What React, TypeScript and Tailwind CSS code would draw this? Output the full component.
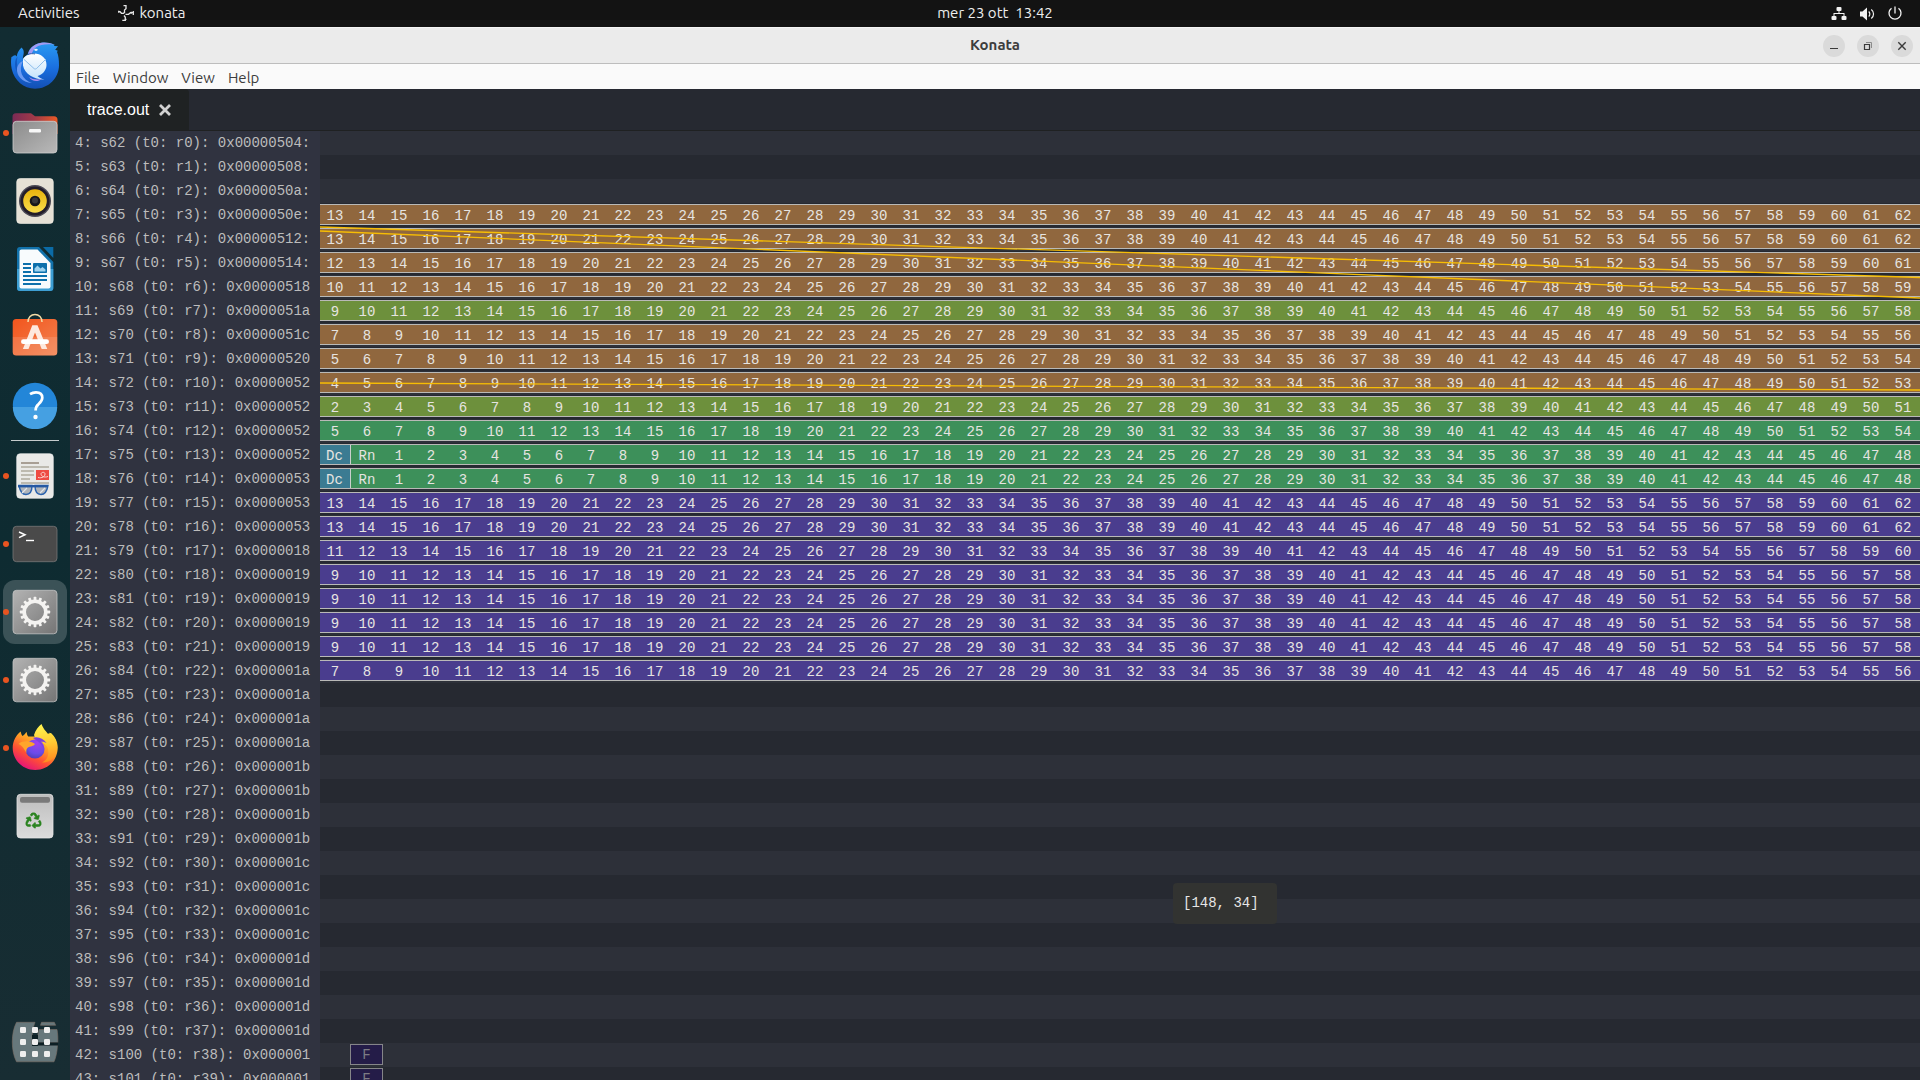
import type { ReactNode } from "react";
import { FaRecycle } from "react-icons/fa";

type Tone = "brown" | "olive" | "green" | "purple";

interface TraceRow {
  label: string;
  tone?: Tone;
  start?: number;
  decode?: boolean;
  fetch?: boolean;
}

const TONES: Record<Tone, string> = {
  brown: "bg-[#90673e]",
  olive: "bg-[#6d903c]",
  green: "bg-[#3d905a]",
  purple: "bg-[#4a3d8e]",
};

const COLUMNS = 50;

const ROWS: TraceRow[] = [
  { label: "4: s62 (t0: r0): 0x00000504:" },
  { label: "5: s63 (t0: r1): 0x00000508:" },
  { label: "6: s64 (t0: r2): 0x0000050a:" },
  { label: "7: s65 (t0: r3): 0x0000050e:", tone: "brown", start: 13 },
  { label: "8: s66 (t0: r4): 0x00000512:", tone: "brown", start: 13 },
  { label: "9: s67 (t0: r5): 0x00000514:", tone: "brown", start: 12 },
  { label: "10: s68 (t0: r6): 0x00000518", tone: "brown", start: 10 },
  { label: "11: s69 (t0: r7): 0x0000051a", tone: "olive", start: 9 },
  { label: "12: s70 (t0: r8): 0x0000051c", tone: "brown", start: 7 },
  { label: "13: s71 (t0: r9): 0x00000520", tone: "brown", start: 5 },
  { label: "14: s72 (t0: r10): 0x0000052", tone: "brown", start: 4 },
  { label: "15: s73 (t0: r11): 0x0000052", tone: "olive", start: 2 },
  { label: "16: s74 (t0: r12): 0x0000052", tone: "green", start: 5 },
  { label: "17: s75 (t0: r13): 0x0000052", tone: "green", start: 1, decode: true },
  { label: "18: s76 (t0: r14): 0x0000053", tone: "green", start: 1, decode: true },
  { label: "19: s77 (t0: r15): 0x0000053", tone: "purple", start: 13 },
  { label: "20: s78 (t0: r16): 0x0000053", tone: "purple", start: 13 },
  { label: "21: s79 (t0: r17): 0x0000018", tone: "purple", start: 11 },
  { label: "22: s80 (t0: r18): 0x0000019", tone: "purple", start: 9 },
  { label: "23: s81 (t0: r19): 0x0000019", tone: "purple", start: 9 },
  { label: "24: s82 (t0: r20): 0x0000019", tone: "purple", start: 9 },
  { label: "25: s83 (t0: r21): 0x0000019", tone: "purple", start: 9 },
  { label: "26: s84 (t0: r22): 0x000001a", tone: "purple", start: 7 },
  { label: "27: s85 (t0: r23): 0x000001a" },
  { label: "28: s86 (t0: r24): 0x000001a" },
  { label: "29: s87 (t0: r25): 0x000001a" },
  { label: "30: s88 (t0: r26): 0x000001b" },
  { label: "31: s89 (t0: r27): 0x000001b" },
  { label: "32: s90 (t0: r28): 0x000001b" },
  { label: "33: s91 (t0: r29): 0x000001b" },
  { label: "34: s92 (t0: r30): 0x000001c" },
  { label: "35: s93 (t0: r31): 0x000001c" },
  { label: "36: s94 (t0: r32): 0x000001c" },
  { label: "37: s95 (t0: r33): 0x000001c" },
  { label: "38: s96 (t0: r34): 0x000001d" },
  { label: "39: s97 (t0: r35): 0x000001d" },
  { label: "40: s98 (t0: r36): 0x000001d" },
  { label: "41: s99 (t0: r37): 0x000001d" },
  { label: "42: s100 (t0: r38): 0x000001", fetch: true },
  { label: "43: s101 (t0: r39): 0x000001", fetch: true },
];

function Cell({ children }: { children: ReactNode }) {
  return <span className="w-8 shrink-0 text-center">{children}</span>;
}

function StageBar({ row }: { row: TraceRow }) {
  if (row.fetch) {
    return (
      <div className="mt-px ml-[30px] h-[21px] w-[33px] border border-[#858589] bg-[#241c48] text-center leading-[21px] text-[#7d7c84]">
        F
      </div>
    );
  }
  if (!row.tone || row.start === undefined) return null;
  const first = row.start;
  const count = row.decode ? COLUMNS - 2 : COLUMNS;
  return (
    <div
      className={`mt-px -ml-px flex h-[21px] w-full grow overflow-hidden border-y border-[#b9b9b7] leading-[22px] text-[#e6e4e1] ${TONES[row.tone]}`}
    >
      {row.decode && (
        <>
          <span className="w-8 shrink-0 border-r border-[#c9cfcc] bg-[#3b7b92] text-center">Dc</span>
          <Cell>Rn</Cell>
        </>
      )}
      {Array.from({ length: count }, (_, i) => (
        <Cell key={i}>{first + i}</Cell>
      ))}
    </div>
  );
}

function Dependencies() {
  return (
    <svg className="pointer-events-none absolute top-0 right-0 left-[250px] h-[300px] w-[calc(100%-250px)]" aria-hidden="true">
      <g stroke="#f7bd04" strokeWidth="1.300">
        <line x1="0" y1="96" x2="100%" y2="146.500" />
        <line x1="0" y1="100" x2="100%" y2="167" />
        <line x1="0" y1="252" x2="100%" y2="259" />
      </g>
    </svg>
  );
}

/* ---------- dock icons, all drawn on a 48 x 48 canvas ---------- */

function Svg({ children }: { children: ReactNode }) {
  return (
    <svg viewBox="0 0 48 48" className="size-12" aria-hidden="true">
      {children}
    </svg>
  );
}

function ThunderbirdIcon() {
  return (
    <Svg>
      <defs>
        <linearGradient id="tb" x1="0" y1="0" x2="0" y2="1">
          <stop offset="0" stopColor="#2a9bf2" />
          <stop offset="0.55" stopColor="#1a6fe0" />
          <stop offset="1" stopColor="#134fb4" />
        </linearGradient>
        <linearGradient id="tbm" x1="0" y1="0" x2="0" y2="1">
          <stop offset="0" stopColor="#ffffff" />
          <stop offset="1" stopColor="#c3e2fb" />
        </linearGradient>
      </defs>
      <path d="M10.5 6.5c-3 3-4.500 6-4.700 9C4 13 3 14.500.4 16c-.5 3.500-.6 8 .3 12C3.500 39.500 12.500 47.700 24 47.700 37.500 47.700 48 37 48 24c0-5-.5-9.500-2-13l.8-1.300-2.600-.9 2.800-3.600-4-.2.6-1.300C35-.3 24.500 1.200 19.500 7.500c-1.700 2.200-2.500 4.200-2.800 6-1.500 1-3.500 2.500-5 4.500C12 14 14.500 10 10.500 6.500z" fill="url(#tb)" />
      <path d="M17 13.500c1-7 8-12 16-12 3.500 0 7 .7 10.500 2.200-8-1-14-.2-18 2.300-2 1.300-4 4.500-5 7z" fill="#b79bf3" opacity="0.85" />
      <path d="M6.500 15.500C5 22 6 32 14 38c-7-3-10-9-10-15 0-3 1-6 2.500-7.500z" fill="#0f4fb5" opacity=".7" />
      <path d="M12 20c-5 9-1 19 9 22-10-.5-16-8-15-15 .5-3 3-6 6-7z" fill="#6a9af2" />
      <path d="M12 18c1.500-3 6-5.500 11-5.500 7 0 12.500 4.500 12.500 11.500 0 6-5 10-9 11 2 2 4 3 7 3.500-9 .5-20-5-21.500-14z" fill="url(#tbm)" />
      <path d="M12.500 18l10.500 9.500c.8.7 1.800.7 2.600 0L35 18" fill="none" stroke="#8dbdeb" strokeWidth="1" />
      <path d="M18 36c3 2.500 9 3 13 2-4 3-10 3-13-2z" fill="#a98cf0" />
      <ellipse cx="25" cy="8.800" rx="1.800" ry="1.100" fill="#e6f3ff" />
      <path d="M17 13.500c2-1 5-1 7-.5" stroke="#0d3f94" fill="none" strokeWidth=".8" />
    </Svg>
  );
}

function FilesIcon() {
  return (
    <Svg>
      <defs>
        <linearGradient id="fb" x1="0" x2="1">
          <stop offset="0" stopColor="#7a2a55" />
          <stop offset="0.5" stopColor="#a33a48" />
          <stop offset="1" stopColor="#ea5a26" />
        </linearGradient>
        <linearGradient id="ff" x1="0" x2="1" y2="1">
          <stop offset="0" stopColor="#8b8b8b" />
          <stop offset="1" stopColor="#b9b9b9" />
        </linearGradient>
      </defs>
      <path d="M5 4.300h15l4 3h19a3.500 3.500 0 0 1 3.500 3.500V25h-45V8A3.600 3.600 0 0 1 5 4.300z" fill="url(#fb)" />
      <rect x="2" y="12.300" width="44" height="31.700" rx="3.500" fill="url(#ff)" stroke="#cfcfcf" strokeWidth=".8" />
      <rect x="18" y="20" width="12" height="3.400" rx="1.200" fill="#f7f7f7" />
    </Svg>
  );
}

function SpeakerIcon() {
  return (
    <Svg>
      <defs>
        <linearGradient id="sp" x1="0" x2="0" y1="0" y2="1">
          <stop offset="0" stopColor="#e8b30c" />
          <stop offset="1" stopColor="#f9dc4c" />
        </linearGradient>
      </defs>
      <rect x="5.700" y="1.500" width="36.600" height="45" rx="3.500" fill="#e6e1d6" stroke="#f5f2ea" strokeWidth=".6" />
      <circle cx="24" cy="24" r="16" fill="#4a4854" />
      <circle cx="24" cy="24" r="14.500" fill="#231d2a" />
      <circle cx="24" cy="24" r="11.800" fill="url(#sp)" />
      <circle cx="24" cy="24" r="5.300" fill="#17171a" />
      <circle cx="24" cy="23.500" r="3" fill="#38383b" />
    </Svg>
  );
}

function WriterIcon() {
  return (
    <Svg>
      <path d="M9 2h19l14.300 15v26a3 3 0 0 1-3 3H9a3 3 0 0 1-3-3V5a3 3 0 0 1 3-3z" fill="#1272ab" />
      <path d="M6 24h36.300v19a3 3 0 0 1-3 3H9a3 3 0 0 1-3-3z" fill="#3d9ed2" />
      <path d="M10.500 4.500h16L39.500 18v23.500a2 2 0 0 1-2 2h-27a2 2 0 0 1-2-2v-35a2 2 0 0 1 2-2z" fill="#f8fbfd" />
      <path d="M32 2h10.300v11z" fill="#0b6ba6" />
      <g fill="#0d70ac">
        <path d="M12 18h8v2h-8zM12 22h8v2h-8zM12 26h8v2h-8zM12 30h24v2H12zM12 34h24v2H12zM12 38h18v2H12z" />
        <rect x="22" y="18" width="14" height="10" rx=".8" />
      </g>
      <path d="M23.500 26.500v-3l3-3 3 3 2-1.500 3 2.500v2z" fill="#9ed3ef" />
    </Svg>
  );
}

function SoftwareIcon() {
  return (
    <Svg>
      <defs>
        <linearGradient id="sw" x1="0" x2="1" y1="0" y2="1">
          <stop offset="0" stopColor="#f2551d" />
          <stop offset="1" stopColor="#f28250" />
        </linearGradient>
      </defs>
      <rect x="1.700" y="6" width="44.600" height="36.400" rx="3.500" fill="url(#sw)" />
      <path d="M1.700 24h44.600v15a3.500 3.500 0 0 1-3.500 3.500H5.200A3.500 3.500 0 0 1 1.700 39z" fill="#fff" opacity=".12" />
      <path d="M17 9c0-4.500 3-7.600 7-7.600S31 4.500 31 9" fill="none" stroke="#f3dca6" strokeWidth="1.500" />
      <path d="M21.300 12.300h5.200L36.300 36h-5.600L24 19.500 17.500 36h-5.600z" fill="#fde9df" />
      <rect x="10" y="26.300" width="28" height="4.800" rx="2.400" fill="#ffffff" />
    </Svg>
  );
}

function HelpIcon() {
  return (
    <Svg>
      <circle cx="24" cy="24" r="22.200" fill="#2386d8" />
      <path d="M1.800 26a22.200 22.200 0 0 0 44.400 0z" fill="#45a0e2" />
      <path d="M19 13.200c2-1.300 4-1.800 6-1.800 4 0 6.300 2.200 6.300 5.400 0 3-1.700 4.500-3.700 6.300-2 1.700-3 3-3 6.400" fill="none" stroke="#fff" strokeWidth="2.700" />
      <circle cx="24.500" cy="36" r="2.200" fill="#fff" />
    </Svg>
  );
}

function DocumentViewerIcon() {
  return (
    <Svg>
      <rect x="5.700" y="1.700" width="36.600" height="44.600" rx="3.500" fill="#e9e9e7" stroke="#f7f7f7" strokeWidth=".6" />
      <path d="M10 10h18v2H10z" fill="#a89f95" />
      <path d="M10 14h28v2H10zM10 18h13v2H10zM10 22h13v2H10zM10 26h9v2h-9zM10 30h28v2H10z" fill="#bdbab0" />
      <rect x="25" y="18" width="13" height="10" fill="#ee4b43" />
      <path d="M27 25.500c4 1 7-1 7-3.500s-4-2-4 0 3 4 7 2.500" fill="none" stroke="#fbd6d2" strokeWidth="1" />
      <path d="M8 33.500h13c0 6-2 9-6 9s-6-3.500-7-9zM24 33.500h13c-1 5.500-3 9-7 9s-6-3-6-9z" fill="#aeb4bb" stroke="#2a62ad" strokeWidth="1.400" />
      <path d="M7 33h30v2.400H7z" fill="#2458a3" />
      <path d="M11 41l5-5M29 41l5-5" stroke="#e3e6ea" strokeWidth="1.200" />
    </Svg>
  );
}

function TerminalIcon() {
  return (
    <Svg>
      <rect x="2" y="6.300" width="44" height="35.400" rx="3.500" fill="#4a4a4a" stroke="#777" strokeWidth=".8" />
      <path d="M8 12l6 2.800-6 2.800" fill="none" stroke="#fff" strokeWidth="1.500" />
      <path d="M15 20.500h8" stroke="#fff" strokeWidth="1.400" />
    </Svg>
  );
}

function SettingsIcon() {
  return (
    <Svg>
      <defs>
        <linearGradient id="st" x1="0" x2="1" y1="0" y2="1">
          <stop offset="0" stopColor="#b3b3b3" />
          <stop offset="1" stopColor="#757575" />
        </linearGradient>
      </defs>
      <rect x="2" y="2.300" width="44" height="43.500" rx="3.500" fill="url(#st)" stroke="#c4c4c4" strokeWidth=".8" />
      <circle cx="24" cy="24" r="10.800" fill="none" stroke="#f4f3f1" strokeWidth="3.600" />
      {Array.from({ length: 16 }, (_, i) => (
        <rect key={i} x="22.600" y="8.800" width="2.800" height="4" rx=".6" fill="#f4f3f1" transform={`rotate(${i * 22.5} 24 24)`} />
      ))}
    </Svg>
  );
}

function FirefoxIcon() {
  return (
    <Svg>
      <defs>
        <linearGradient id="fx" x1=".85" y1="0" x2=".2" y2="1">
          <stop offset="0.05" stopColor="#ffe03a" />
          <stop offset="0.4" stopColor="#ff9a25" />
          <stop offset="0.65" stopColor="#ff4f35" />
          <stop offset="0.95" stopColor="#e3117c" />
        </linearGradient>
        <linearGradient id="fy" x1=".5" y1="0" x2=".6" y2="1">
          <stop offset="0" stopColor="#fff44f" />
          <stop offset="0.5" stopColor="#ffc933" />
          <stop offset="1" stopColor="#ff8a1e" />
        </linearGradient>
        <radialGradient id="fg" cx=".6" cy=".2" r=".9">
          <stop offset="0" stopColor="#a03ff0" />
          <stop offset="0.6" stopColor="#6a4be8" />
          <stop offset="1" stopColor="#4a3aa8" />
        </radialGradient>
      </defs>
      <path d="M9.700 7.500c.3 2 .8 3 1.700 4.500 1.600-.8 3-2.500 4.200-4.300.3 2.300.6 3.600 1.600 4.800h8L40 9c4 3.500 6.700 9 6.700 14.500 0 13-10 22.500-22.500 22.500S1.700 36 1.700 24c0-6.500 3-12.500 8-16.500z" fill="url(#fx)" />
      <path d="M30.500 0c2 6 6 8 7.500 12 .7-.6.800-2 .6-3.500 4.500 3.500 7.600 9 7.600 15C46.200 33 39 39 31 38.500c5-2 8-8 5.500-15C34 18 24 17 23 11c1.500-5 4.500-8.500 7.500-11z" fill="url(#fy)" />
      <circle cx="24" cy="25" r="9.600" fill="url(#fg)" />
      <path d="M7.500 20c2-2.500 7-3 10.500-2.500 3 .5 4.500 1.500 6 2.500-1.500 2.500-5 2-7 3.500-1.500 1-2 3-1.500 5.500C13 25 12 22 7.500 20z" fill="#ffa52b" />
      <path d="M22 14c4-2 10 0 13.500 5-3-1.500-4.500-1.500-6-1 2 2 3 4 3 6-2-5-6-7-10.500-10z" fill="#7b3fe0" />
    </Svg>
  );
}

function TrashIcon() {
  return (
    <Svg>
      <defs>
        <linearGradient id="tr" x1="0" x2="0" y1="0" y2="1">
          <stop offset="0" stopColor="#bdbdbd" />
          <stop offset="1" stopColor="#dcdcdc" />
        </linearGradient>
      </defs>
      <rect x="6" y="2.300" width="36" height="43.700" rx="3.500" fill="url(#tr)" stroke="#e4e4e4" strokeWidth=".8" />
      <rect x="9" y="5" width="30" height="5.700" rx="2" fill="#7a7a7a" />
      <FaRecycle x="14.500" y="20.500" width="19" height="19" color="#2b8420" stroke="#2b8420" strokeWidth="18" />
    </Svg>
  );
}

function ShowAppsIcon() {
  return (
    <Svg>
      <path d="M5.500 4.300H24l-1 3c-2 5-2 14-2 19.500h25.500c-.3 7-1.500 12.500-3.500 17H5.500C2.500 38 1.300 31 1.300 24s1.200-14 4.200-19.700zM30.500 4.300h12.800l1.400 3H29.500zM28 11.500h18c.8 4 1 8.500.8 13H26.500c0-4 .3-9 1.500-13z" fill="#67787c" stroke="#7c6f66" strokeWidth=".6" />
      <path d="M21 17h6v11h-6zM27 24.500h20v3H27z" fill="#0c1f24" />
      {[12, 24, 36].map((y) =>
        [12, 24, 36].map((x) => (
          <rect key={`${x}-${y}`} x={x - 3} y={y - 3} width="6" height="6" rx="1.300" fill="#efefef" />
        )),
      )}
    </Svg>
  );
}

interface DockEntry {
  name: string;
  icon: ReactNode;
  running?: boolean;
  active?: boolean;
}

const FAVOURITES: DockEntry[] = [
  { name: "Thunderbird", icon: <ThunderbirdIcon /> },
  { name: "Files", icon: <FilesIcon />, running: true },
  { name: "Rhythmbox", icon: <SpeakerIcon /> },
  { name: "Writer", icon: <WriterIcon /> },
  { name: "Software", icon: <SoftwareIcon /> },
  { name: "Help", icon: <HelpIcon /> },
];

const RUNNING: DockEntry[] = [
  { name: "Document Viewer", icon: <DocumentViewerIcon />, running: true },
  { name: "Terminal", icon: <TerminalIcon />, running: true },
  { name: "Konata", icon: <SettingsIcon />, running: true, active: true },
  { name: "Settings", icon: <SettingsIcon />, running: true },
  { name: "Firefox", icon: <FirefoxIcon />, running: true },
  { name: "Trash", icon: <TrashIcon /> },
];

function DockButton({ entry }: { entry: DockEntry }) {
  return (
    <button
      type="button"
      aria-label={entry.name}
      className={`relative flex size-16 items-center justify-center rounded-xl ${entry.active ? "bg-[#3b5257]" : ""}`}
    >
      {entry.running && <span className="absolute top-[29px] left-0 size-1.5 rounded-full bg-[#e95420]" />}
      {entry.icon}
    </button>
  );
}

function Dock() {
  return (
    <nav aria-label="Dock" className="flex w-[70px] shrink-0 flex-col items-center bg-linear-to-b from-[#122c32] via-[#0e2b31] to-[#182d33] pt-1.5 pb-1.5">
      <div className="flex flex-col gap-1">
        {FAVOURITES.map((e) => (
          <DockButton key={e.name} entry={e} />
        ))}
      </div>
      <hr className="my-[3px] w-12 border-t border-[#c5cbcc]" />
      <div className="flex flex-col gap-1">
        {RUNNING.map((e) => (
          <DockButton key={e.name} entry={e} />
        ))}
      </div>
      <div className="mt-auto">
        <DockButton entry={{ name: "Show Applications", icon: <ShowAppsIcon /> }} />
      </div>
    </nav>
  );
}

/* ---------- desktop top bar ---------- */

function KonataGlyph() {
  return (
    <svg viewBox="0 0 16 16" className="size-4" fill="none" stroke="#e8e8e8" strokeWidth="1.300" aria-hidden="true">
      <path d="M5.500.7H8v3L6.500 5v2M.3 6.700H2l1.500 1.600h2L7 7M4.300 15.300h3v-3L6 10.500M7.500 9.300h3l2-1.600h3M15.300 6v4M13.300 6.800v2M.7 5.800v2M8.500 14.300h-2" />
    </svg>
  );
}

function TopBar() {
  return (
    <header className="grid h-[27px] shrink-0 grid-cols-3 items-center bg-[#131313] text-[15px] leading-6 text-[#eeeeee]">
      <div className="flex items-center pb-0.5 pl-[18px]">
        <button type="button">Activities</button>
        <button type="button" className="ml-[38px] flex items-center gap-1.5">
          <KonataGlyph />
          konata
        </button>
      </div>
      <button type="button" className="justify-self-center pb-0.5 pl-[70px] whitespace-pre">
        mer 23 ott  13:42
      </button>
      <div className="flex items-center justify-end gap-3 pr-[17px]">
        <svg viewBox="0 0 16 16" className="size-4" fill="#f2f2f2" role="img" aria-label="Network">
          <rect x="5.500" y="1" width="5" height="4" rx="1" />
          <rect x=".5" y="10" width="5" height="4" rx="1" />
          <rect x="10.500" y="10" width="5" height="4" rx="1" />
          <path d="M7.500 5h1v2h5v3h-1V8h-9v2h-1V7h5z" />
        </svg>
        <svg viewBox="0 0 16 16" className="size-4" role="img" aria-label="Volume">
          <path d="M1 5.500h2.500L8 1.500v13L3.500 10.500H1z" fill="#f2f2f2" />
          <path d="M9.700 5.500c1.500 1.300 1.500 3.700 0 5M12.300 3.500c3 2.500 3 6.500 0 9" fill="none" stroke="#f2f2f2" strokeWidth="1.200" />
        </svg>
        <svg viewBox="0 0 16 16" className="size-4" fill="none" stroke="#f2f2f2" strokeWidth="1.300" role="img" aria-label="Power">
          <path d="M4.500 2.300a6 6 0 1 0 7 0M8 .5v7" />
        </svg>
      </div>
    </header>
  );
}

function WindowButton({ name, children }: { name: string; children: ReactNode }) {
  return (
    <button type="button" aria-label={name} className="flex size-[22px] items-center justify-center rounded-full bg-[#dadada]">
      <svg viewBox="0 0 10 10" className="size-2.5" fill="none" stroke="#3a3a3a" aria-hidden="true">
        {children}
      </svg>
    </button>
  );
}

function TitleBar() {
  return (
    <div className="grid h-[37px] shrink-0 grid-cols-[1fr_auto_1fr] items-center border-t border-b border-t-[#f6f6f6] border-b-[#bdbdbd] bg-[#ebebeb]">
      <span />
      <h1 className="text-[15px] font-bold text-[#3d3d3d]">Konata</h1>
      <div className="flex justify-end gap-3 pr-[7px]">
        <WindowButton name="Minimize">
          <path d="M1 7.500h8" />
        </WindowButton>
        <WindowButton name="Restore">
          <path d="M1.500 3.500h5v5h-5z" strokeWidth="1.200" />
          <path d="M3 1.500h5.500V7" stroke="#8a8a8a" />
        </WindowButton>
        <WindowButton name="Close">
          <path d="M1.300 1.300l7.400 7.400M8.700 1.300L1.300 8.700" strokeWidth="1.400" />
        </WindowButton>
      </div>
    </div>
  );
}

function MenuBar() {
  return (
    <div className="flex h-[25px] shrink-0 items-center gap-[13px] bg-[#fafafa] pt-0.5 pl-1.5 text-[15px] leading-5 text-[#3d3d3d]">
      {["File", "Window", "View", "Help"].map((m) => (
        <button key={m} type="button">
          {m}
        </button>
      ))}
    </div>
  );
}

function TabStrip() {
  return (
    <div className="flex h-[42px] shrink-0 border-b border-[#1f2122] bg-[#262931]">
      <div className="flex items-center gap-2.5 rounded-tr bg-[#1f2223] pr-[18px] pl-[17px] font-['Liberation_Sans',sans-serif] text-base text-white">
        <span>trace.out</span>
        <button type="button" aria-label="Close trace.out">
          <svg viewBox="0 0 12 12" className="size-3" stroke="#d2d2d2" strokeWidth="2.800" aria-hidden="true">
            <path d="M1 1l10 10M11 1L1 11" />
          </svg>
        </button>
      </div>
    </div>
  );
}

function TraceView() {
  return (
    <main className="relative min-h-0 flex-1 overflow-hidden bg-[#262931] font-['Liberation_Mono',monospace] text-sm">
      {ROWS.map((row, i) => (
        <div key={row.label} className={`flex h-6 ${i % 2 === 0 ? "bg-[#2d3039]" : "bg-[#262931]"}`}>
          <div className="w-[250px] shrink-0 overflow-hidden bg-[#303340] pl-[5px] leading-6 whitespace-pre text-[#bcbcbc]">{row.label}</div>
          <div className="flex min-w-0 flex-1 overflow-hidden">
            <StageBar row={row} />
          </div>
        </div>
      ))}
      <Dependencies />
      <div role="tooltip" className="absolute top-[752px] left-[1103px] rounded bg-[#323331] py-2.5 pr-[18px] pl-2.5 leading-[21px] whitespace-pre text-[#e6e6e6]">
        [148, 34]
      </div>
    </main>
  );
}

export default function App() {
  return (
    <div className="flex h-screen flex-col overflow-hidden font-['Ubuntu','Noto_Sans',sans-serif]">
      <TopBar />
      <div className="flex min-h-0 flex-1">
        <Dock />
        <div className="flex min-w-0 flex-1 flex-col">
          <TitleBar />
          <MenuBar />
          <TabStrip />
          <TraceView />
        </div>
      </div>
    </div>
  );
}
